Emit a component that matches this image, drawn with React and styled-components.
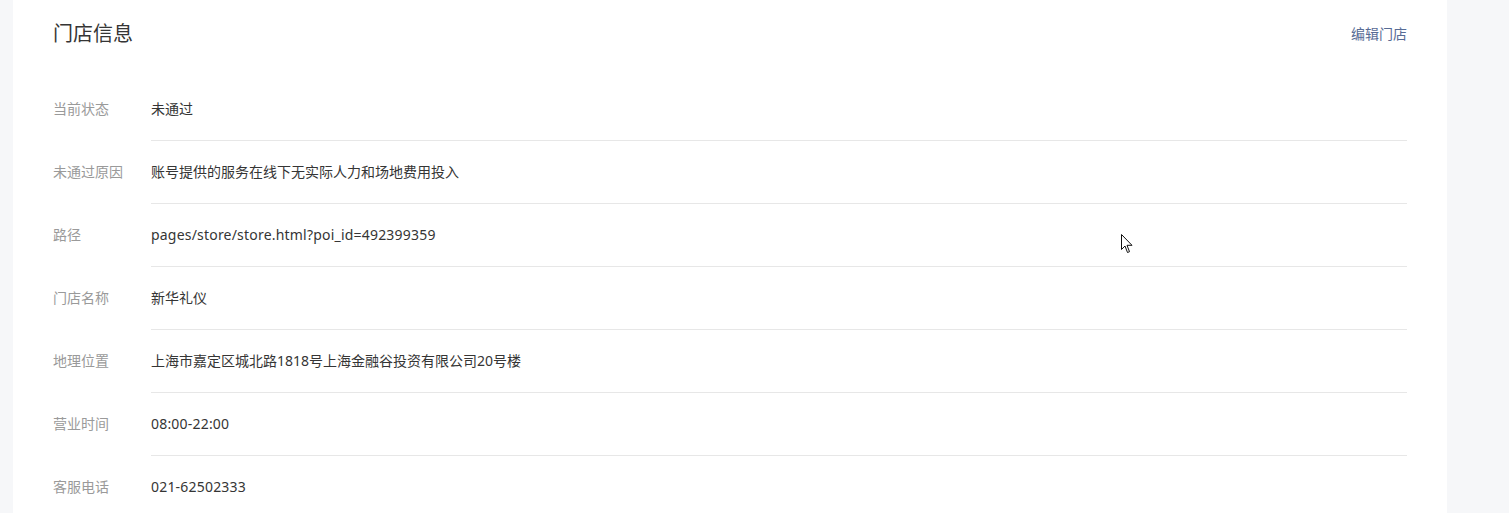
import React from 'react'
import styled, { createGlobalStyle } from 'styled-components'

const GlobalStyle = createGlobalStyle`
  html, body {
    margin: 0;
    padding: 0;
    background: #f6f7f9;
    font-family: "Noto Sans", "Noto Sans CJK SC", sans-serif;
    color: #353535;
  }
`

const Page = styled.div`
  position: relative;
  height: 513px;
  overflow: hidden;
  padding-left: 13px;
`

const Card = styled.section`
  width: 1354px;
  min-height: 560px;
  background: #fff;
  padding: 0 40px;
`

const Header = styled.div`
  display: flex;
  align-items: center;
  justify-content: space-between;
  padding: 22px 0 32px;
  line-height: 24px;
`

const Title = styled.h2`
  margin: 0;
  font-size: 20px;
  font-weight: 400;
  color: #353535;
`

const EditLink = styled.a`
  font-size: 14px;
  color: #576b95;
  text-decoration: none;
  cursor: pointer;
`

const Row = styled.div`
  display: flex;
  font-size: 14px;
  line-height: 18px;
`

const Label = styled.div`
  width: 98px;
  flex: none;
  padding: 22px 0;
  color: #9a9a9a;
`

const Value = styled.div`
  flex: 1;
  padding: 22px 0;
  border-bottom: 1px solid #e7e7e7;
  color: #353535;
`

const Latin = styled.span`
  letter-spacing: 0.2px;
`

const Cursor = styled.svg`
  position: absolute;
  left: 1121px;
  top: 234px;
`

const rows = [
  ['当前状态', '未通过'],
  ['未通过原因', '账号提供的服务在线下无实际人力和场地费用投入'],
  ['路径', <Latin>pages/store/store.html?poi_id=492399359</Latin>],
  ['门店名称', '新华礼仪'],
  ['地理位置', '上海市嘉定区城北路1818号上海金融谷投资有限公司20号楼'],
  ['营业时间', <Latin>08:00-22:00</Latin>],
  ['客服电话', <Latin>021-62502333</Latin>]
]

export default function App () {
  return (
    <Page>
      <GlobalStyle />
      <Card>
        <Header>
          <Title>门店信息</Title>
          <EditLink>编辑门店</EditLink>
        </Header>
        {rows.map(([label, value]) => (
          <Row key={label}>
            <Label>{label}</Label>
            <Value>{value}</Value>
          </Row>
        ))}
      </Card>
      <Cursor width="13" height="20" viewBox="0 0 13 20">
        <path d="M0.5 0.5 L0.5 15.5 L4 12 L6.5 18.5 L8.5 17.7 L6 11.3 L11 11.3 Z" fill="#fff" stroke="#111" strokeWidth="1" strokeLinejoin="miter" />
      </Cursor>
    </Page>
  )
}
